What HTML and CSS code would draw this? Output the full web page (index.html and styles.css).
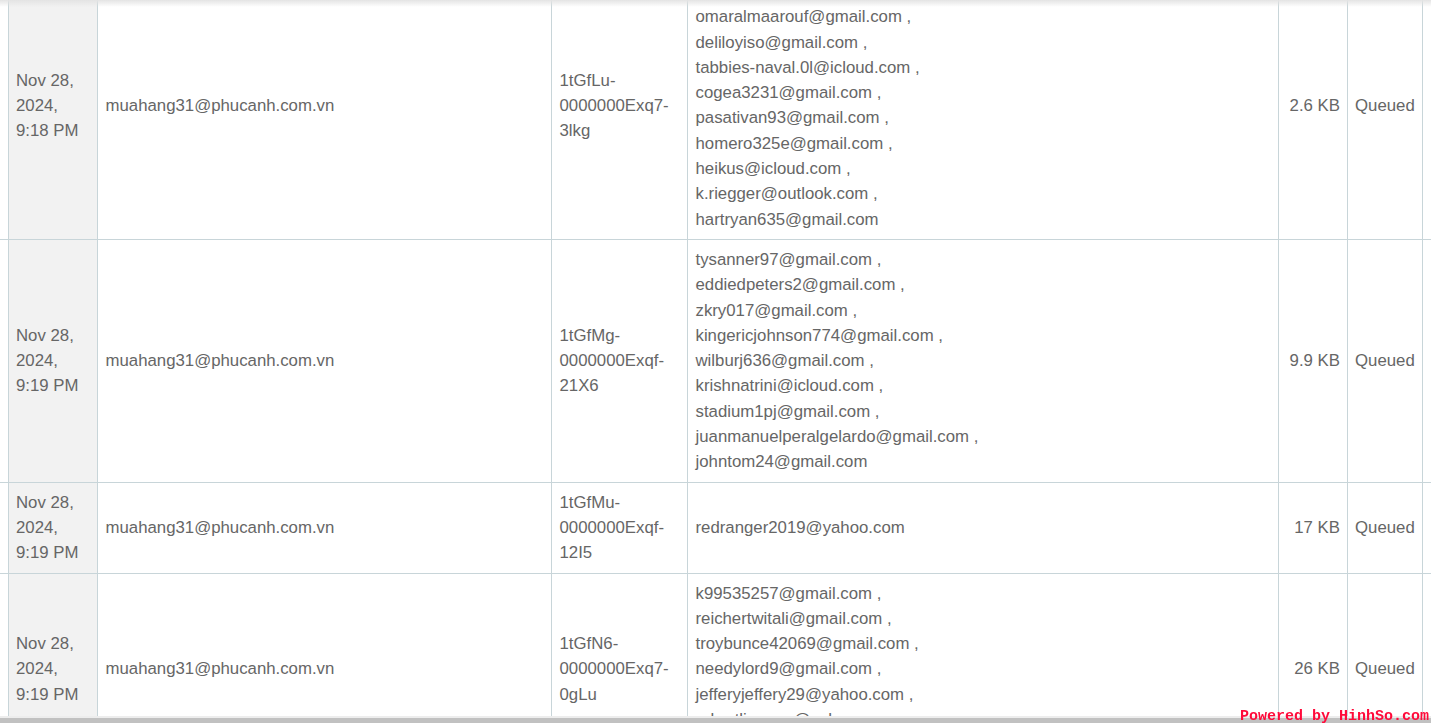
FILE: index.html
```html
<!DOCTYPE html>
<html lang="en">
<head>
<meta charset="UTF-8" />
<meta name="viewport" content="width=device-width, initial-scale=1" />
<title>Mail queue</title>
<link rel="stylesheet" href="styles.css">
</head>

<body>
  <div class="top-shade"></div>

  <div class="queue-scroll" id="queueScroll">
    <table class="queue-table">
      <colgroup>
        <col class="c-pick"><col class="c-date"><col class="c-from"><col class="c-id">
        <col class="c-to"><col class="c-size"><col class="c-status"><col class="c-more">
      </colgroup>
      <tbody>
        <tr>
          <td class="pick"></td>
          <td class="date">Nov 28, 2024, 9:18 PM</td>
          <td>muahang31@phucanh.com.vn</td>
          <td>1tGfLu-0000000Exq7-3lkg</td>
          <td class="to">
            jgray.qp@gmail.com ,<br>
            omaralmaarouf@gmail.com ,<br>
            deliloyiso@gmail.com ,<br>
            tabbies-naval.0l@icloud.com ,<br>
            cogea3231@gmail.com ,<br>
            pasativan93@gmail.com ,<br>
            homero325e@gmail.com ,<br>
            heikus@icloud.com ,<br>
            k.riegger@outlook.com ,<br>
            hartryan635@gmail.com
          </td>
          <td class="size">2.6 KB</td>
          <td class="status">Queued</td>
          <td class="more"></td>
        </tr>
        <tr>
          <td class="pick"></td>
          <td class="date">Nov 28, 2024, 9:19 PM</td>
          <td>muahang31@phucanh.com.vn</td>
          <td>1tGfMg-0000000Exqf-21X6</td>
          <td class="to">
            tysanner97@gmail.com ,<br>
            eddiedpeters2@gmail.com ,<br>
            zkry017@gmail.com ,<br>
            kingericjohnson774@gmail.com ,<br>
            wilburj636@gmail.com ,<br>
            krishnatrini@icloud.com ,<br>
            stadium1pj@gmail.com ,<br>
            juanmanuelperalgelardo@gmail.com ,<br>
            johntom24@gmail.com
          </td>
          <td class="size">9.9 KB</td>
          <td class="status">Queued</td>
          <td class="more"></td>
        </tr>
        <tr>
          <td class="pick"></td>
          <td class="date">Nov 28, 2024, 9:19 PM</td>
          <td>muahang31@phucanh.com.vn</td>
          <td>1tGfMu-0000000Exqf-12I5</td>
          <td class="to">redranger2019@yahoo.com</td>
          <td class="size">17 KB</td>
          <td class="status">Queued</td>
          <td class="more"></td>
        </tr>
        <tr>
          <td class="pick"></td>
          <td class="date">Nov 28, 2024, 9:19 PM</td>
          <td>muahang31@phucanh.com.vn</td>
          <td>1tGfN6-0000000Exq7-0gLu</td>
          <td class="to">
            k99535257@gmail.com ,<br>
            reichertwitali@gmail.com ,<br>
            troybunce42069@gmail.com ,<br>
            needylord9@gmail.com ,<br>
            jefferyjeffery29@yahoo.com ,<br>
            robertlinemm@yahoo.com ,<br>
            dsmith4410@gmail.com
          </td>
          <td class="size">26 KB</td>
          <td class="status">Queued</td>
          <td class="more"></td>
        </tr>
        <tr>
          <td class="pick"></td>
          <td class="date">Nov 28, 2024, 9:20 PM</td>
          <td>muahang31@phucanh.com.vn</td>
          <td>1tGfNa-0000000Exqf-3x9P</td>
          <td class="to">mlopez88@gmail.com</td>
          <td class="size">3.1 KB</td>
          <td class="status">Queued</td>
          <td class="more"></td>
        </tr>
      </tbody>
    </table>
  </div>

  <div class="h-scrollbar"></div>
  <div class="watermark">Powered by HinhSo.com</div>

<script>
// page was captured scrolled a little way into the queue
document.getElementById('queueScroll').scrollTop = 29;
</script>
</body>
</html>
```

FILE: styles.css
```css
* { box-sizing: border-box; }
html, body { margin:0; padding:0; height:100%; overflow:hidden; background:#fff; }
body {
  font-family: "Liberation Sans", Arial, sans-serif;
  font-size:16.8px; color:#666;
}

/* shadow of the fixed bar above the list */
.top-shade {
  position:fixed; top:0; left:0; right:0; height:7px; z-index:5;
  background:linear-gradient(#e4e4e4, rgba(255,255,255,0));
  pointer-events:none;
}

.queue-scroll { height:100vh; overflow:hidden; }

/* Table */
.queue-table {
  border-collapse:collapse; table-layout:fixed;
  width:1450px; line-height:25.3px;
}
.c-pick{width:8px;} .c-date{width:89px;} .c-from{width:454px;} .c-id{width:136px;}
.c-to{width:591px;} .c-size{width:69px;} .c-status{width:75px;} .c-more{width:28px;}

.queue-table td {
  border:1px solid #c8d5d9;
  padding:7px 8px;
  vertical-align:middle;
}
.queue-table td.pick { border-left:none; padding:0; }
.queue-table td.more { padding:0; }
.queue-table td.date { background:#f2f2f2; padding-left:7.5px; }
.queue-table td.size { text-align:right; padding-right:6.5px; }
.queue-table td.status { padding-left:7.5px; }
.queue-table td.to { white-space:nowrap; }

/* horizontal scrollbar at the bottom */
.h-scrollbar {
  position:fixed; left:0; right:0; bottom:0; height:7px; z-index:6;
  background:#c1c1c1; border-top:2px solid #ededed;
}

.watermark {
  position:fixed; right:2px; bottom:-2px; z-index:7;
  font-family:"Liberation Mono", monospace; font-weight:bold;
  font-size:15px; line-height:16px; color:#ff0a3a;
  -webkit-font-smoothing:none;
}
```
